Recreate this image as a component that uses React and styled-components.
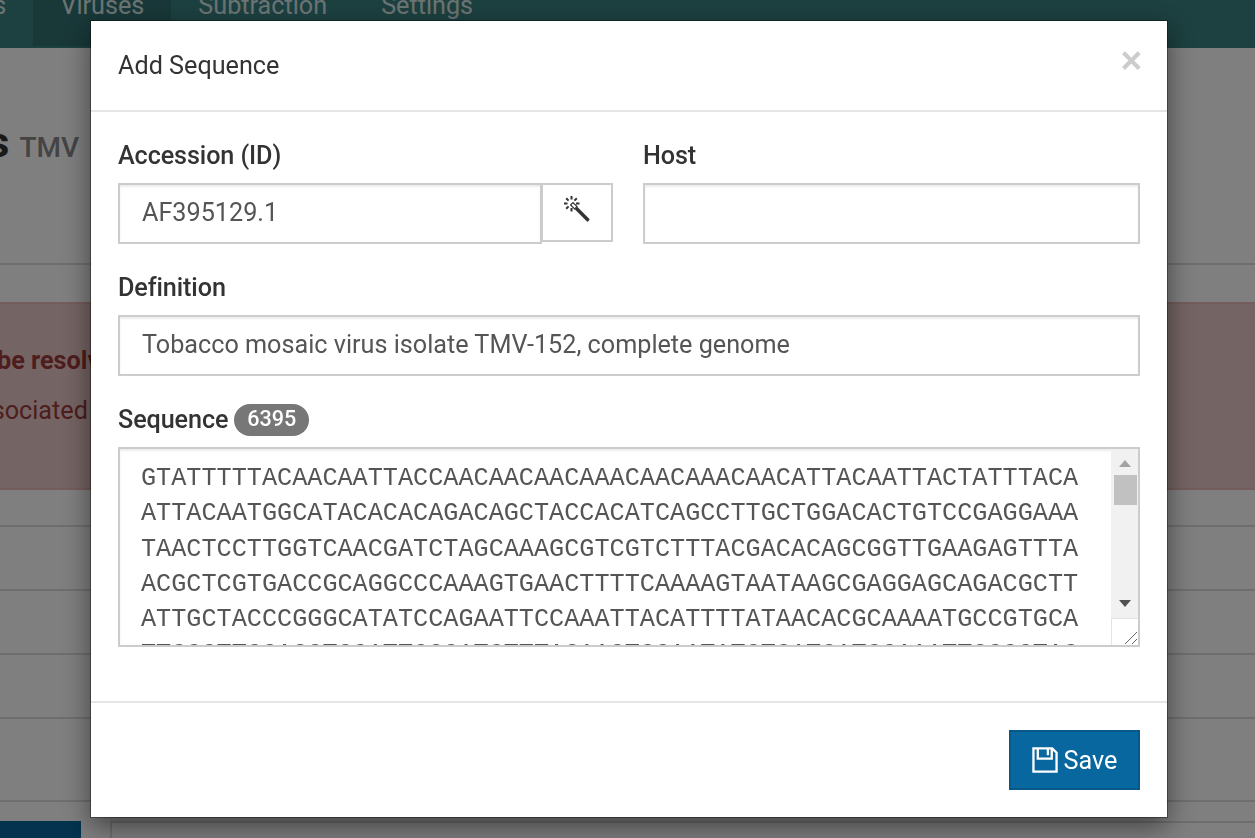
import styled, { createGlobalStyle } from 'styled-components';

const GlobalStyle = createGlobalStyle`
  html, body {
    margin: 0;
    height: 100%;
    overflow: hidden;
    background: #fff;
  }
  * {
    box-sizing: border-box;
  }
  body {
    font-family: Roboto, "Liberation Sans", sans-serif;
    color: #333;
  }
`;

const Page = styled.div`
  height: 838px;
  overflow: hidden;
`;

const Nav = styled.nav`
  display: flex;
  height: 48px;
  background: #3a8281;
  overflow: hidden;
`;

const NavItem = styled.div`
  height: 46px;
  padding: 0 27px;
  font-size: 25.2px;
  line-height: 12px;
  color: #d8e8e8;
  background: ${(props) => (props.$active ? '#327071' : 'transparent')};
  margin-left: ${(props) => props.$offset || 0};
`;

const PageHead = styled.div`
  height: 217px;
  border-bottom: 2px solid #ddd;
  padding-top: 69px;
`;

const PageTitle = styled.h1`
  width: 79px;
  margin: 0;
  display: flex;
  justify-content: flex-end;
  align-items: baseline;
  gap: 10px;
  font-size: 43px;
  line-height: 50px;
  font-weight: 700;
  white-space: nowrap;

  small {
    font-size: 28px;
    font-weight: 500;
    color: #888;
  }
`;

const Alert = styled.div`
  height: 188px;
  margin-top: 37px;
  background: #ebc8c8;
  border-top: 2px solid #e6b8b8;
  border-bottom: 2px solid #e6b8b8;
  color: #9c3a3a;
  font-size: 25.2px;
  padding-top: 42px;
  white-space: nowrap;
`;

const AlertLine = styled.div`
  margin-left: ${(props) => props.$offset};
  margin-bottom: 21px;
  font-weight: ${(props) => (props.$strong ? 700 : 400)};
`;

const Row = styled.div`
  height: ${(props) => props.$height};
  border-bottom: 2px solid #ddd;
`;

const Footer = styled.div`
  display: flex;
  height: 17px;
  margin-top: 19px;
  gap: 29px;
`;

const DarkButton = styled.div`
  width: 81px;
  background: #07679e;
`;

const SideLine = styled.div`
  flex: 1;
  border-left: 2px solid #ddd;
  border-top: 2px solid #ddd;
`;

const Backdrop = styled.div`
  position: fixed;
  inset: 0;
  background: rgba(0, 0, 0, 0.5);
  padding: 21px 0 0 91px;
`;

const Modal = styled.div`
  width: 1076px;
  height: 796px;
  background: #fff;
  box-shadow: 0 0 0 1px rgba(0, 0, 0, 0.35), 0 9px 26px rgba(0, 0, 0, 0.5);
  display: flex;
  flex-direction: column;
`;

const ModalHeader = styled.header`
  height: 91px;
  flex: none;
  border-bottom: 2px solid #e5e5e5;
  padding: 0 25px 0 27px;
  display: flex;
  justify-content: space-between;
  align-items: flex-start;
`;

const ModalTitle = styled.h4`
  margin: 28px 0 0;
  font-size: 25.2px;
  line-height: 33px;
  font-weight: 400;
  color: #333;
`;

const Close = styled.span`
  font-family: "Liberation Sans", sans-serif;
  font-size: 37px;
  line-height: 37px;
  margin-top: 21px;
  font-weight: 700;
  color: #ccc;
`;

const ModalBody = styled.div`
  flex: 1;
  padding: 27px 27px 0;
  display: flex;
  flex-direction: column;
`;

const FieldRow = styled.div`
  display: flex;
  gap: 30px;
`;

const Field = styled.div`
  flex: ${(props) => (props.$basis ? `0 0 ${props.$basis}` : 'none')};
  min-width: 0;
  margin-bottom: ${(props) => props.$gap || '27px'};
`;

const Label = styled.label`
  display: flex;
  align-items: center;
  gap: 6px;
  height: 33px;
  margin-bottom: 11px;
  font-size: 25.2px;
  font-weight: 500;
  letter-spacing: -0.1px;
  color: #333;
`;

const Badge = styled.span`
  height: 32px;
  padding: 0 13px;
  border-radius: 16px;
  background: #777;
  color: #fff;
  font-size: 21.6px;
  font-weight: 500;
  line-height: 30px;
`;

const Input = styled.input`
  display: block;
  width: 100%;
  min-width: 0;
  height: 61px;
  padding: 0 22px 3px;
  border: 2px solid #ccc;
  border-radius: 0;
  outline: none;
  box-shadow: inset 0 2px 2px rgba(0, 0, 0, 0.075);
  font-family: inherit;
  font-size: 25.2px;
  color: #555;
`;

const InputGroup = styled.div`
  display: flex;
`;

const AddonButton = styled.button`
  flex: none;
  width: 72px;
  height: 59px;
  margin-left: -1px;
  border: 2px solid #ccc;
  background: #fff;
  color: #333;
  padding: 0 2px 8px 0;
  display: flex;
  align-items: center;
  justify-content: center;
`;

const TextareaWrap = styled.div`
  position: relative;
  height: 200px;
`;

const SequenceArea = styled.textarea`
  display: block;
  width: 100%;
  height: 100%;
  padding: 12px 21px 0;
  border: 2px solid #ccc;
  border-radius: 0;
  outline: none;
  resize: none;
  overflow: hidden;
  white-space: pre;
  box-shadow: inset 0 2px 2px rgba(0, 0, 0, 0.075);
  font-family: "Liberation Mono", monospace;
  font-size: 25.2px;
  line-height: 35.28px;
  color: #555;
`;

const Scrollbar = styled.div`
  position: absolute;
  top: 2px;
  right: 2px;
  bottom: 2px;
  width: 27px;
  background: #f1f1f1;
`;

const ScrollArrow = styled.span`
  position: absolute;
  left: 8px;
  ${(props) => (props.$up ? 'top: 11px;' : 'top: 151px;')}
  border-left: 6px solid transparent;
  border-right: 6px solid transparent;
  ${(props) => (props.$up ? 'border-bottom: 7px solid #a3a3a3;' : 'border-top: 7px solid #505050;')}
`;

const ScrollThumb = styled.span`
  position: absolute;
  top: 26px;
  left: 3px;
  width: 23px;
  height: 30px;
  background: #c1c1c1;
`;

const Resizer = styled.span`
  position: absolute;
  right: 2px;
  bottom: 2px;
  width: 27px;
  height: 27px;
  background: #fff;
  border-left: 1px solid #e4e4e4;
  border-top: 1px solid #e4e4e4;

  svg {
    display: block;
    position: absolute;
    right: 0;
    bottom: 0;
  }
`;

const ModalFooter = styled.footer`
  height: 116px;
  flex: none;
  border-top: 2px solid #e5e5e5;
  padding: 27px 27px 0;
  display: flex;
  justify-content: flex-end;
  align-items: flex-start;
`;

const SaveButton = styled.button`
  display: flex;
  align-items: center;
  justify-content: center;
  gap: 6px;
  width: 131px;
  height: 60px;
  border: 2px solid #055a8a;
  background: #07679e;
  color: #fff;
  font-family: inherit;
  font-size: 25.2px;
  padding: 0;
`;

const SEQUENCE = [
  'GTATTTTTACAACAATTACCAACAACAACAAACAACAAACAACATTACAATTACTATTTACA',
  'ATTACAATGGCATACACACAGACAGCTACCACATCAGCCTTGCTGGACACTGTCCGAGGAAA',
  'TAACTCCTTGGTCAACGATCTAGCAAAGCGTCGTCTTTACGACACAGCGGTTGAAGAGTTTA',
  'ACGCTCGTGACCGCAGGCCCAAAGTGAACTTTTCAAAAGTAATAAGCGAGGAGCAGACGCTT',
  'ATTGCTACCCGGGCATATCCAGAATTCCAAATTACATTTTATAACACGCAAAATGCCGTGCA',
  'TTCGGTTCGACGTCGATTCGGATCTTTACAACTCGAATATCTCATCATCGAAATTCGGGTAC',
].join('\n');

function WandIcon() {
  return (
    <svg width="27" height="27" viewBox="0 0 27 27">
      <g stroke="#333" strokeWidth="2" strokeLinecap="butt">
        <path d="M8.5 1v3.5M8.5 13v3.5M1 8.5h3.5M13 8.5h3.5M3.2 3.2l2.4 2.4M13.8 3.2l-2.4 2.4M3.2 13.8l2.4-2.4" />
      </g>
      <path d="M7.6 10l2.4-2.4 4 4-2.4 2.4z" fill="#fff" stroke="#333" strokeWidth="1.2" />
      <path d="M11.8 14.2l2.4-2.4 12 12c.5.5.5 1 0 1.5l-1 1c-.5.5-1 .5-1.5 0z" fill="#333" />
    </svg>
  );
}

function SaveIcon() {
  return (
    <svg width="26" height="26" viewBox="0 0 27 27" fill="none" stroke="#fff" strokeWidth="2.4">
      <path d="M1.5 1.5H21L25.5 6V25.5H1.5Z" />
      <path d="M6 1.5V12H20.5V1.5" />
      <path d="M16.5 2V8.5" />
    </svg>
  );
}

function App() {
  return (
    <>
      <GlobalStyle />
      <Page>
        <Nav>
          <NavItem $offset="-118px">Samples</NavItem>
          <NavItem $active>Viruses</NavItem>
          <NavItem>Subtraction</NavItem>
          <NavItem>Settings</NavItem>
        </Nav>
        <PageHead>
          <PageTitle>
            Tobacco mosaic virus <small>TMV</small>
          </PageTitle>
        </PageHead>
        <Alert>
          <AlertLine $strong $offset="-3px">be resolved</AlertLine>
          <AlertLine $offset="-35px">associated</AlertLine>
        </Alert>
        <Row $height="37px" />
        <Row $height="64px" />
        <Row $height="64px" />
        <Row $height="64px" />
        <Row $height="83px" />
        <Footer>
          <DarkButton />
          <SideLine />
        </Footer>
      </Page>

      <Backdrop>
        <Modal>
          <ModalHeader>
            <ModalTitle>Add Sequence</ModalTitle>
            <Close>×</Close>
          </ModalHeader>
          <ModalBody>
            <FieldRow>
              <Field $basis="495px">
                <Label>Accession (ID)</Label>
                <InputGroup>
                  <Input readOnly value="AF395129.1" />
                  <AddonButton>
                    <WandIcon />
                  </AddonButton>
                </InputGroup>
              </Field>
              <Field $basis="497px">
                <Label>Host</Label>
                <Input readOnly value="" />
              </Field>
            </FieldRow>
            <Field>
              <Label>Definition</Label>
              <Input readOnly value="Tobacco mosaic virus isolate TMV-152, complete genome" />
            </Field>
            <Field $gap="0">
              <Label>
                Sequence <Badge>6395</Badge>
              </Label>
              <TextareaWrap>
                <SequenceArea readOnly value={SEQUENCE} />
                <Scrollbar>
                  <ScrollArrow $up />
                  <ScrollThumb />
                  <ScrollArrow />
                </Scrollbar>
                <Resizer>
                  <svg width="14" height="14" viewBox="0 0 14 14">
                    <path d="M1 13 L13 1 M8 13 L13 8" stroke="#666" strokeWidth="1" />
                  </svg>
                </Resizer>
              </TextareaWrap>
            </Field>
          </ModalBody>
          <ModalFooter>
            <SaveButton>
              <SaveIcon />
              Save
            </SaveButton>
          </ModalFooter>
        </Modal>
      </Backdrop>
    </>
  );
}

export default App;
